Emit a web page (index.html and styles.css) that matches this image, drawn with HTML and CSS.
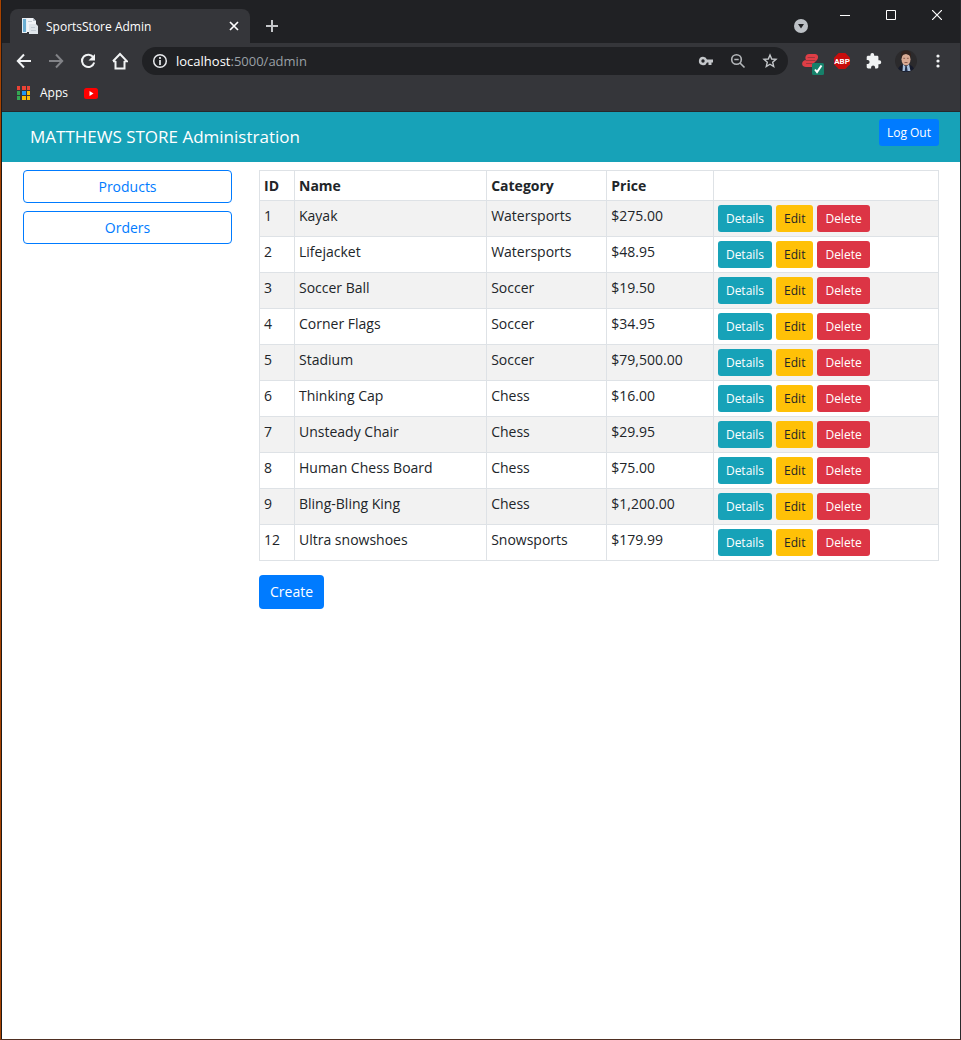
FILE: index.html
```html
<!DOCTYPE html>
<html lang="en">
<head>
<meta charset="utf-8">
<meta name="viewport" content="width=device-width, initial-scale=1">
<title>SportsStore Admin</title>
<link rel="stylesheet" href="styles.css">
</head>
<body>
<div class="window">
  <header class="chrome">
    <div class="tab-strip">
      <div class="tab">
        <svg class="favicon" width="16" height="16" viewBox="0 0 16 16" aria-hidden="true"><path d="M0 0h5v15H0z" fill="#e8eef3"/><path d="M1 1h3v13H1z" fill="#6baed2"/><path d="M5 0h6l3 3v11H5z" fill="#f1f4f7"/><path d="M11 0v3h3z" fill="#b8c2cc"/><path d="M7 6h7l2 2v8H7z" fill="#dfe5ea"/><path d="M9 9.500h4M9 12.500h5M6 3.500h4" stroke="#c3ccd4"/></svg>
        <span class="tab-title">SportsStore Admin</span>
        <button class="tab-close" aria-label="Close tab"><svg width="10" height="10" viewBox="0 0 10 10"><path d="m1 1 8 8M9 1 1 9" stroke="#fff" stroke-width="1.7"/></svg></button>
      </div>
      <button class="new-tab" aria-label="New tab"><svg width="12" height="12" viewBox="0 0 12 12"><path d="M6 0v12M0 6h12" stroke="#c4c6c9" stroke-width="2"/></svg></button>
      <button class="tab-search" aria-label="Search tabs"><svg width="14" height="14" viewBox="0 0 14 14"><circle cx="7" cy="7" r="7" fill="#bdc1c6"/><path d="M4 5h6L7 9.500z" fill="#202124"/></svg></button>
      <div class="window-controls">
        <button aria-label="Minimize"><svg width="10" height="10" viewBox="0 0 10 10"><path d="M0 5.500h10" stroke="#fff"/></svg></button>
        <button aria-label="Maximize"><svg width="10" height="10" viewBox="0 0 10 10"><path d="M.5.5h9v9h-9z" fill="none" stroke="#fff"/></svg></button>
        <button aria-label="Close"><svg width="10" height="10" viewBox="0 0 10 10"><path d="m0 0 10 10M10 0 0 10" stroke="#fff" stroke-width="1.200"/></svg></button>
      </div>
    </div>
    <div class="toolbar">
      <div class="tools">
        <button aria-label="Back"><svg width="16" height="16" viewBox="0 0 16 16"><path d="M15 8H2M8 1.500 1.800 8 8 14.500" fill="none" stroke="#f1f3f4" stroke-width="2"/></svg></button>
        <button aria-label="Forward"><svg width="16" height="16" viewBox="0 0 16 16"><path d="M1 8h13M8 1.500 14.200 8 8 14.500" fill="none" stroke="#828387" stroke-width="2"/></svg></button>
        <button aria-label="Reload"><svg width="16" height="16" viewBox="0 0 16 16"><path d="M13.500 4.600A6.200 6.200 0 1 0 14.200 9.500" fill="none" stroke="#f1f3f4" stroke-width="2"/><path d="M15 1v6.500H8.500z" fill="#f1f3f4"/></svg></button>
        <button aria-label="Home"><svg width="16" height="18" viewBox="0 0 16 18"><path d="M3.500 9v7.500h9V9M1 9.300 8 2l7 7.300h-2.500M1 9.300h2.500" fill="none" stroke="#f1f3f4" stroke-width="2"/></svg></button>
      </div>
      <div class="omnibox">
        <svg width="16" height="16" viewBox="0 0 16 16" aria-hidden="true"><circle cx="8" cy="8" r="6.300" fill="none" stroke="#e8eaed" stroke-width="1.500"/><path d="M8 7v5M8 4v2" stroke="#e8eaed" stroke-width="1.700"/></svg>
        <div class="url" role="textbox" aria-label="Address"><span class="host">localhost</span>:5000/admin</div>
        <div class="tools">
          <button aria-label="Saved passwords"><svg width="16" height="16" viewBox="0 0 16 16"><path fill-rule="evenodd" d="M5 3.800a4.200 4.200 0 0 1 4 2.700h6v3h-1.500V12h-3V9.500H9A4.200 4.200 0 1 1 5 3.800zM5 6.300a1.700 1.700 0 1 0 0 3.400 1.700 1.700 0 0 0 0-3.400z" fill="#c4c7ca"/></svg></button>
          <button aria-label="Zoom"><svg width="16" height="16" viewBox="0 0 16 16"><circle cx="6.500" cy="6.500" r="4.800" fill="none" stroke="#b4b7ba" stroke-width="1.600"/><path d="m10 10 4.500 4.500M4.300 6.500h4.400" stroke="#b4b7ba" stroke-width="1.600"/></svg></button>
          <button aria-label="Bookmark this page"><svg width="16" height="16" viewBox="0 0 16 16"><path d="m8 2 1.700 4 4.300.4-3.300 2.800 1 4.300L8 11.200l-3.700 2.300 1-4.300L2 6.400 6.300 6z" fill="none" stroke="#c4c7ca" stroke-width="1.400"/></svg></button>
        </div>
      </div>
      <div class="tools">
        <button aria-label="Extension"><svg width="28" height="28" viewBox="0 0 28 28"><path d="M13 7h6c3.500 0 4 4 1.500 6.500L18 16v4h-8c-4 0-5-4-2.500-6 .7-.6 1.500-.9 2.500-1-1.500-2.500 0-6 3-6z" fill="#df3e46"/><path d="M12 10.500h6.500M10 13.500h9M10.500 16.500H16" stroke="#8f353b" stroke-width=".8" stroke-linecap="round"/><rect x="16" y="16" width="12" height="12" rx="1.500" fill="#16816a"/><path d="m19 22.500 2 2.500 4.500-6.500" fill="none" stroke="#fff" stroke-width="2"/></svg></button>
        <button aria-label="Adblock Plus"><svg width="16" height="16" viewBox="0 0 16 16"><path d="M4.700 0h6.600L16 4.700v6.600L11.300 16H4.700L0 11.300V4.700z" fill="#c70d0c"/><text class="abp" x="8" y="11" text-anchor="middle">ABP</text></svg></button>
        <button aria-label="Extensions"><svg width="16" height="16" viewBox="0 0 16 16"><path d="M13.300 7.300h-.9V4.200c0-.9-.6-1.400-1.400-1.400H8.200v-.9a1.900 1.900 0 0 0-3.800 0v.9H2.200C1.400 2.800.7 3.400.7 4.200V7h.9a2 2 0 0 1 0 4H.7v3c0 .8.700 1.400 1.500 1.400h2.900v-.9a2 2 0 0 1 4 0v.9H11c.8 0 1.400-.6 1.400-1.400v-2.800h.9a1.950 1.950 0 0 0 0-3.900z" fill="#f1f3f4"/></svg></button>
        <button aria-label="Profile"><svg width="22" height="22" viewBox="0 0 22 22"><circle cx="11" cy="11" r="11" fill="#2b2a2c"/><path d="M3 18.500 5 16l4-2h4l4 2 2 2.500A11 11 0 0 1 3 18.500z" fill="#151a2b"/><path d="m8 14 3 3 3-3 1.500 7h-8z" fill="#a9c0dc"/><path d="M10.300 16.500h1.600l.8 5h-3z" fill="#23304d"/><ellipse cx="11" cy="9.300" rx="4.500" ry="6.200" fill="#d9aa93"/><path d="M6.300 8.500C5 3 7 .5 11 .5s6 2.500 4.700 8L15 5.500l-4-1.500-3.500 1z" fill="#32221d"/><path d="M8.300 8.300h1.800m1.800 0h1.800M9.500 12.500h3" stroke="#8a5a4c"/></svg></button>
        <button aria-label="Menu"><svg width="16" height="16" viewBox="0 0 16 16" fill="#f1f3f4"><circle cx="8" cy="3" r="1.600"/><circle cx="8" cy="8" r="1.600"/><circle cx="8" cy="13" r="1.600"/></svg></button>
      </div>
    </div>
    <nav class="bookmarks" aria-label="Bookmarks">
      <a href="#apps"><svg width="14" height="14" viewBox="0 0 14 14" aria-hidden="true"><path d="M0 0h3v4H0zM5 0h4v4H5zM10 0h3v4h-3z" fill="#ea4335"/><path d="M0 5h3v4H0zM0 10h3v4H0z" fill="#34a853"/><path d="M5 5h4v4H5z" fill="#2196f3"/><path d="M10 5h3v4h-3zM5 10h4v4H5zM10 10h3v4h-3z" fill="#fbbc05"/></svg>Apps</a>
      <a href="#youtube" aria-label="YouTube"><svg width="16" height="16" viewBox="0 0 16 16"><rect x="1" y="3" width="14" height="11" rx="2.500" fill="#f00"/><path d="M6.500 6v5L10.500 8.500z" fill="#fff"/></svg></a>
    </nav>
  </header>
  <div class="app-header">
    <span class="brand">MATTHEWS STORE Administration</span>
    <a class="btn btn-sm btn-primary" href="#logout">Log Out</a>
  </div>
  <div class="layout">
    <nav class="sidebar" aria-label="Sections">
      <a class="btn btn-outline" href="#products">Products</a>
      <a class="btn btn-outline" href="#orders">Orders</a>
    </nav>
    <main class="content">
      <table class="products">
        <colgroup><col class="col-id"><col class="col-name"><col class="col-category"><col class="col-price"><col></colgroup>
        <thead><tr><th>ID</th><th>Name</th><th>Category</th><th>Price</th><td></td></tr></thead>
        <tbody>
          <tr><td>1</td><td>Kayak</td><td>Watersports</td><td>$275.00</td><td><div class="actions"><a class="btn btn-sm btn-info" href="#details">Details</a><a class="btn btn-sm btn-warning" href="#edit">Edit</a><button class="btn btn-sm btn-danger">Delete</button></div></td></tr>
          <tr><td>2</td><td>Lifejacket</td><td>Watersports</td><td>$48.95</td><td><div class="actions"><a class="btn btn-sm btn-info" href="#details">Details</a><a class="btn btn-sm btn-warning" href="#edit">Edit</a><button class="btn btn-sm btn-danger">Delete</button></div></td></tr>
          <tr><td>3</td><td>Soccer Ball</td><td>Soccer</td><td>$19.50</td><td><div class="actions"><a class="btn btn-sm btn-info" href="#details">Details</a><a class="btn btn-sm btn-warning" href="#edit">Edit</a><button class="btn btn-sm btn-danger">Delete</button></div></td></tr>
          <tr><td>4</td><td>Corner Flags</td><td>Soccer</td><td>$34.95</td><td><div class="actions"><a class="btn btn-sm btn-info" href="#details">Details</a><a class="btn btn-sm btn-warning" href="#edit">Edit</a><button class="btn btn-sm btn-danger">Delete</button></div></td></tr>
          <tr><td>5</td><td>Stadium</td><td>Soccer</td><td>$79,500.00</td><td><div class="actions"><a class="btn btn-sm btn-info" href="#details">Details</a><a class="btn btn-sm btn-warning" href="#edit">Edit</a><button class="btn btn-sm btn-danger">Delete</button></div></td></tr>
          <tr><td>6</td><td>Thinking Cap</td><td>Chess</td><td>$16.00</td><td><div class="actions"><a class="btn btn-sm btn-info" href="#details">Details</a><a class="btn btn-sm btn-warning" href="#edit">Edit</a><button class="btn btn-sm btn-danger">Delete</button></div></td></tr>
          <tr><td>7</td><td>Unsteady Chair</td><td>Chess</td><td>$29.95</td><td><div class="actions"><a class="btn btn-sm btn-info" href="#details">Details</a><a class="btn btn-sm btn-warning" href="#edit">Edit</a><button class="btn btn-sm btn-danger">Delete</button></div></td></tr>
          <tr><td>8</td><td>Human Chess Board</td><td>Chess</td><td>$75.00</td><td><div class="actions"><a class="btn btn-sm btn-info" href="#details">Details</a><a class="btn btn-sm btn-warning" href="#edit">Edit</a><button class="btn btn-sm btn-danger">Delete</button></div></td></tr>
          <tr><td>9</td><td>Bling-Bling King</td><td>Chess</td><td>$1,200.00</td><td><div class="actions"><a class="btn btn-sm btn-info" href="#details">Details</a><a class="btn btn-sm btn-warning" href="#edit">Edit</a><button class="btn btn-sm btn-danger">Delete</button></div></td></tr>
          <tr><td>12</td><td>Ultra snowshoes</td><td>Snowsports</td><td>$179.99</td><td><div class="actions"><a class="btn btn-sm btn-info" href="#details">Details</a><a class="btn btn-sm btn-warning" href="#edit">Edit</a><button class="btn btn-sm btn-danger">Delete</button></div></td></tr>
        </tbody>
      </table>
      <a class="btn btn-primary" href="#create">Create</a>
    </main>
  </div>
</div>
</body>
</html>
```
FILE: styles.css
```css
*, *::before, *::after { box-sizing: border-box; }

body {
  margin: 0;
  background: #fff;
  color: #212529;
  font: 14px/21px "Segoe UI", "Open Sans", "Noto Sans", sans-serif;
}

button {
  border: 0;
  padding: 0;
  background: none;
  color: inherit;
  font: inherit;
}

a { color: inherit; text-decoration: none; }
svg { display: block; flex: none; }

.window {
  min-height: 100vh;
  border-left: 1px solid #a84300;
  border-right: 1px solid #29292b;
  border-bottom: 1px solid #4f2f22;
  box-shadow: inset 1px 0 #1d1a1a;
  padding-left: 1px;
}

/* Browser chrome */
.chrome {
  background: #35363a;
  border-bottom: 1px solid #27282b;
  color: #fff;
  font-size: 12px;
}

.tab-strip {
  display: flex;
  height: 43px;
  background: #202124;
  padding-left: 8px;
}

.tab {
  display: flex;
  align-items: center;
  gap: 8px;
  width: 240px;
  margin-top: 9px;
  padding: 0 11px 0 12px;
  background: #35363a;
  border-radius: 8px 8px 0 0;
}

.tab-title { flex: 1; }

.new-tab {
  display: grid;
  place-items: center;
  width: 44px;
  padding-top: 9px;
}

.tab-search {
  margin: 19px 14px auto auto;
}

.window-controls {
  display: flex;
  height: 30px;
}

.window-controls button {
  display: grid;
  place-items: center;
  width: 46px;
}

.toolbar {
  display: flex;
  align-items: center;
  gap: 6px;
  height: 36px;
  padding: 0 6px;
}

.tools { display: flex; }

.tools button {
  display: grid;
  place-items: center;
  width: 32px;
  height: 28px;
}

.omnibox {
  display: flex;
  flex: 1;
  align-items: center;
  gap: 8px;
  height: 28px;
  padding: 0 2px 0 10px;
  border-radius: 14px;
  background: #202124;
}

.url {
  flex: 1;
  color: #9aa0a6;
  font-size: 13px;
}

.host { color: #fff; }

.abp {
  fill: #fff;
  font: bold 8px Roboto, sans-serif;
}

.bookmarks {
  display: flex;
  gap: 15px;
  padding: 3px 15px 8px;
}

.bookmarks a {
  display: flex;
  align-items: center;
  gap: 9px;
}

/* Buttons */
.btn {
  display: inline-block;
  padding: 5px 10px;
  border: 1px solid transparent;
  border-radius: 4px;
  font-size: 14px;
  line-height: 22px;
  text-align: center;
}

.btn-sm {
  padding: 3px 7px;
  border-radius: 3px;
  font-size: 12px;
  line-height: 19px;
}

.btn-primary { background: #007bff; color: #fff; }
.btn-info { background: #17a2b8; color: #fff; }
.btn-warning { background: #ffc107; color: #212529; }
.btn-danger { background: #dc3545; color: #fff; }
.btn-outline { border-color: #007bff; color: #007bff; line-height: 21px; }

/* Administration page */
.app-header {
  display: flex;
  align-items: flex-start;
  justify-content: space-between;
  padding: 7px 21px 7px 28px;
  background: #17a2b8;
  color: #fff;
}

.brand { font-size: 17px; line-height: 36px; }

.layout {
  display: grid;
  grid-template-columns: calc(25% - 20px) 1fr;
  gap: 27px;
  padding: 8px 21px;
}

.sidebar {
  display: flex;
  flex-direction: column;
  gap: 8px;
}

.products {
  width: 100%;
  margin-bottom: 14px;
  border-collapse: collapse;
  table-layout: fixed;
}

.col-id { width: 35px; }
.col-name { width: 28.3%; }
.col-category { width: 17.7%; }
.col-price { width: 15.7%; }

.products th,
.products td {
  padding: 4px;
  border: 1px solid #dee2e6;
  text-align: left;
  vertical-align: top;
}

.products tbody tr:nth-child(odd) { background: #f2f2f2; }

.actions { display: flex; gap: 4px; }
```
